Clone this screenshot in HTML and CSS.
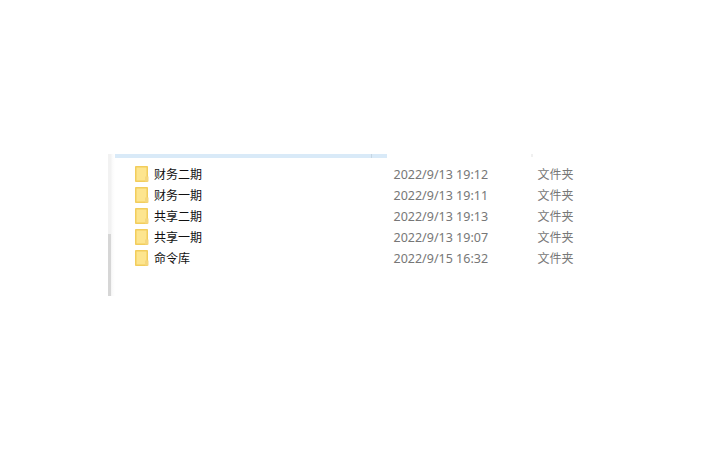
FILE: index.html
```html
<!DOCTYPE html>
<html lang="zh">
<head>
<meta charset="utf-8">
<title>文件夹</title>
<link rel="stylesheet" href="styles.css">
</head>
<body>
<div class="explorer">
  <div class="scrollbar"><div class="thumb"></div></div>
  <div class="content">
    <div class="header">
      <div class="header-bar"><i class="tick"></i></div>
      <i class="header-dot"></i>
    </div>
    <div class="rows">
      <div class="row">
        <svg class="folder" viewBox="0 0 14 16"><path class="f-back" d="M.5.5h12v15H.5z"/><path class="f-front" d="M1.5 1.500h10v13h-10z"/><path class="f-flap" d="M10 10.500h3.500v5H10z"/></svg>
        <span class="name">财务二期</span><span class="date">2022/9/13 19:12</span><span class="type">文件夹</span>
      </div>
      <div class="row">
        <svg class="folder" viewBox="0 0 14 16"><path class="f-back" d="M.5.5h12v15H.5z"/><path class="f-front" d="M1.5 1.500h10v13h-10z"/><path class="f-flap" d="M10 10.500h3.500v5H10z"/></svg>
        <span class="name">财务一期</span><span class="date">2022/9/13 19:11</span><span class="type">文件夹</span>
      </div>
      <div class="row">
        <svg class="folder" viewBox="0 0 14 16"><path class="f-back" d="M.5.5h12v15H.5z"/><path class="f-front" d="M1.5 1.500h10v13h-10z"/><path class="f-flap" d="M10 10.500h3.500v5H10z"/></svg>
        <span class="name">共享二期</span><span class="date">2022/9/13 19:13</span><span class="type">文件夹</span>
      </div>
      <div class="row">
        <svg class="folder" viewBox="0 0 14 16"><path class="f-back" d="M.5.5h12v15H.5z"/><path class="f-front" d="M1.5 1.500h10v13h-10z"/><path class="f-flap" d="M10 10.500h3.500v5H10z"/></svg>
        <span class="name">共享一期</span><span class="date">2022/9/13 19:07</span><span class="type">文件夹</span>
      </div>
      <div class="row">
        <svg class="folder" viewBox="0 0 14 16"><path class="f-back" d="M.5.5h12v15H.5z"/><path class="f-front" d="M1.5 1.500h10v13h-10z"/><path class="f-flap" d="M10 10.500h3.500v5H10z"/></svg>
        <span class="name">命令库</span><span class="date">2022/9/15 16:32</span><span class="type">文件夹</span>
      </div>
    </div>
  </div>
</div>
</body>
</html>
```

FILE: styles.css
```css
html, body {
  margin: 0;
  padding: 0;
  background: #ffffff;
}
body {
  width: 720px;
  height: 450px;
  overflow: hidden;
  font-family: "Noto Sans CJK SC", "Noto Sans", sans-serif;
}
.explorer {
  display: flex;
  width: 620px;
  height: 142px;
  margin: 154px 0 0 108px;
}
.scrollbar {
  display: flex;
  flex-direction: column;
  justify-content: flex-end;
  flex: none;
  width: 7px;
  background: linear-gradient(to right, #f2f2f2 0, #f2f2f2 3px, #fafafa 4px, #ffffff 7px);
}
.thumb {
  height: 62px;
  width: 3px;
  background: #d6d6d6;
}
.content {
  flex: 1;
  display: flex;
  flex-direction: column;
}
.header {
  display: flex;
  align-items: flex-start;
  height: 9px;
}
.header-bar {
  display: flex;
  justify-content: flex-end;
  width: 272px;
  height: 4px;
  background: #d9eaf8;
}
.tick {
  width: 1px;
  height: 4px;
  margin-right: 15px;
  background: #c6d6e3;
}
.header-dot {
  width: 2px;
  height: 3px;
  margin-left: 144px;
  background: #f0f0f0;
}
.rows {
  display: flex;
  flex-direction: column;
}
.row {
  display: flex;
  align-items: center;
  height: 21px;
  padding-left: 20px;
  font-size: 12px;
}
.folder {
  flex: none;
  width: 14px;
  height: 16px;
}
.f-back {
  fill: #f2cd5c;
  stroke: #f2cd5c;
}
.f-front {
  fill: #fde58f;
}
.f-flap {
  fill: #f5d77e;
}
.name {
  width: 239.5px;
  margin-left: 5px;
  color: #111111;
}
.date {
  width: 144px;
  margin-top: 2px;
  font-size: 12.5px;
  color: #777777;
  font-family: "Noto Sans", "Noto Sans CJK SC", sans-serif;
}
.type {
  color: #777777;
}
```
